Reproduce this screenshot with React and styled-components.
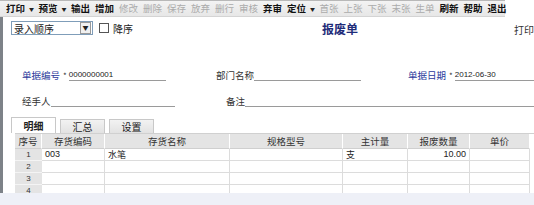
import React from "react";
import styled, { createGlobalStyle } from "styled-components";

const GlobalStyle = createGlobalStyle`
  html, body { margin: 0; padding: 0; background: #ffffff; }
  body {
    width: 534px;
    height: 205px;
    overflow: hidden;
    font-family: "Noto Sans CJK SC", "Liberation Sans", sans-serif;
    font-size: 11px;
    color: #222;
  }
`;

const Page = styled.div`
  width: 534px;
  height: 205px;
  display: flex;
  flex-direction: column;
  background: #ffffff;
`;

const Toolbar = styled.div`
  height: 17px;
  width: 505px;
  display: flex;
  align-items: center;
  padding-left: 6px;
  background: linear-gradient(#f3f3f3, #e7e7e7);
  border-top: 1px solid #b8b8b8;
  border-bottom: 1px solid #d4d4d4;
  box-sizing: border-box;
`;

const ToolButton = styled.span`
  display: inline-flex;
  align-items: center;
  width: ${(p) => (p.arrow ? 32.5 : 24)}px;
  flex: none;
  font-size: 9.5px;
  line-height: 15px;
  color: ${(p) => (p.disabled ? "#ababab" : "#111")};
  font-weight: ${(p) => (p.disabled ? 400 : 700)};
  white-space: nowrap;
`;

const Arrow = styled.span`
  font-size: 5px;
  margin-left: 4px;
  color: #222;
`;

const Body = styled.div`
  flex: 1;
  display: flex;
  border-left: 3px solid #7d8288;
`;

const Form = styled.div`
  flex: 1;
  display: flex;
  flex-direction: column;
`;

const TopRow = styled.div`
  height: 22px;
  display: flex;
  align-items: center;
  padding-left: 8px;
  position: relative;
`;

const Select = styled.div`
  width: 78px;
  height: 12px;
  border: 1px solid #7f9db9;
  display: flex;
  align-items: center;
  justify-content: space-between;
  font-size: 10px;
  padding-left: 2px;
  background: #fff;
`;

const SelectArrow = styled.span`
  width: 9px;
  height: 10px;
  margin-right: 1px;
  border: 1px solid #999;
  background: #f0f0f0;
  font-size: 6px;
  line-height: 10px;
  text-align: center;
`;

const Check = styled.span`
  width: 8px;
  height: 8px;
  border: 1px solid #555;
  margin: 0 4px 0 6px;
  background: #fff;
`;

const Small = styled.span`
  font-size: 10px;
`;

const Title = styled.div`
  position: absolute;
  left: 319px;
  top: 3px;
  font-size: 12px;
  font-weight: 700;
  color: #1f2d7a;
`;

const PrintLabel = styled.div`
  position: absolute;
  right: 0;
  top: 5px;
  font-size: 10px;
  color: #333;
`;

const FieldArea = styled.div`
  padding: 30px 0 0 19px;
  display: flex;
  flex-direction: column;
  gap: 14px;
`;

const FieldRow = styled.div`
  display: flex;
  align-items: flex-end;
  height: 12px;
`;

const Field = styled.div`
  display: flex;
  align-items: flex-end;
  width: ${(p) => p.w}px;
  flex: ${(p) => (p.grow ? 1 : "none")};
`;

const Label = styled.span`
  font-size: 9.5px;
  color: ${(p) => (p.required ? "#2b3a9b" : "#333")};
  white-space: nowrap;
  line-height: 11px;
`;

const Star = styled.span`
  font-size: 8px;
  color: #333;
  margin: 0 2px 0 3px;
  line-height: 11px;
`;

const Line = styled.span`
  flex: 1;
  border-bottom: 1px solid #9a9a9a;
  font-family: "Liberation Sans", sans-serif;
  font-size: 8px;
  line-height: 10px;
  height: 10px;
  color: #222;
  margin-right: ${(p) => p.mr || 0}px;
`;

const Tabs = styled.div`
  display: flex;
  gap: 4px;
  padding-left: 8px;
  margin-top: 10px;
  height: 16px;
  align-items: flex-end;
`;

const Tab = styled.div`
  width: 45px;
  height: ${(p) => (p.active ? 16 : 14)}px;
  box-sizing: border-box;
  border: 1px solid #c8c8c8;
  border-bottom: none;
  background: ${(p) => (p.active ? "#ffffff" : "linear-gradient(#f2f2f2, #e2e2e2)")};
  font-size: 10px;
  font-weight: ${(p) => (p.active ? 700 : 400)};
  display: flex;
  align-items: center;
  justify-content: center;
  color: #222;
`;

const Grid = styled.div`
  margin-left: 12px;
  display: grid;
  grid-template-columns: 27px 63px 125px 113px 65px 62px 60px;
  grid-template-rows: 15px;
  grid-auto-rows: 12px;
  border-top: 1px solid #d0d0d0;
  height: 59px;
  overflow: hidden;
`;

const Head = styled.div`
  background: #e4e4e4;
  border-right: 1px solid #fff;
  border-bottom: 1px solid #cfcfcf;
  font-size: 9.5px;
  text-align: center;
  line-height: 14px;
  color: #333;
`;

const Num = styled.div`
  background: #e4e4e4;
  border-bottom: 1px solid #f4f4f4;
  font-family: "Liberation Sans", sans-serif;
  font-size: 8px;
  text-align: center;
  line-height: 12px;
  color: #333;
`;

const Cell = styled.div`
  border-right: 1px solid #dcdcdc;
  border-bottom: 1px solid #dcdcdc;
  font-size: 9px;
  line-height: 11px;
  padding: 0 3px;
  text-align: ${(p) => (p.right ? "right" : "left")};
  font-family: ${(p) => (p.latin ? '"Liberation Sans", sans-serif' : "inherit")};
  white-space: nowrap;
  overflow: hidden;
`;

const Footer = styled.div`
  height: 13px;
  background: #eef0f7;
`;

const tools = [
  { t: "打印", arrow: true },
  { t: "预览", arrow: true },
  { t: "输出" },
  { t: "增加" },
  { t: "修改", d: true },
  { t: "删除", d: true },
  { t: "保存", d: true },
  { t: "放弃", d: true },
  { t: "删行", d: true },
  { t: "审核", d: true },
  { t: "弃审" },
  { t: "定位", arrow: true },
  { t: "首张", d: true },
  { t: "上张", d: true },
  { t: "下张", d: true },
  { t: "末张", d: true },
  { t: "生单", d: true },
  { t: "刷新" },
  { t: "帮助" },
  { t: "退出" },
];

const heads = ["序号", "存货编码", "存货名称", "规格型号", "主计量", "报废数量", "单价"];

const rows = [
  ["1", "003", "水笔", "", "支", "10.00", ""],
  ["2", "", "", "", "", "", ""],
  ["3", "", "", "", "", "", ""],
  ["4", "", "", "", "", "", ""],
];

export default function App() {
  return (
    <Page>
      <GlobalStyle />
      <Toolbar>
        {tools.map((b) => (
          <ToolButton key={b.t} disabled={b.d} arrow={b.arrow}>
            {b.t}
            {b.arrow && <Arrow>▼</Arrow>}
          </ToolButton>
        ))}
      </Toolbar>
      <Body>
        <Form>
          <TopRow>
            <Select>
              <span>录入顺序</span>
              <SelectArrow>▼</SelectArrow>
            </Select>
            <Check />
            <Small>降序</Small>
            <Title>报废单</Title>
            <PrintLabel>打印</PrintLabel>
          </TopRow>
          <FieldArea>
            <FieldRow>
              <Field w={194}>
                <Label required>单据编号</Label>
                <Star>*</Star>
                <Line mr={50}>0000000001</Line>
              </Field>
              <Field w={192}>
                <Label>部门名称</Label>
                <Line mr={47}></Line>
              </Field>
              <Field grow>
                <Label required>单据日期</Label>
                <Star>*</Star>
                <Line>2012-06-30</Line>
              </Field>
            </FieldRow>
            <FieldRow>
              <Field w={204}>
                <Label>经手人</Label>
                <Line mr={51}></Line>
              </Field>
              <Field grow>
                <Label>备注</Label>
                <Line></Line>
              </Field>
            </FieldRow>
          </FieldArea>
          <Tabs>
            <Tab active>明细</Tab>
            <Tab>汇总</Tab>
            <Tab>设置</Tab>
          </Tabs>
          <Grid>
            {heads.map((h) => (
              <Head key={h}>{h}</Head>
            ))}
            {rows.map((r, i) =>
              r.map((c, j) =>
                j === 0 ? (
                  <Num key={i + "-" + j}>{c}</Num>
                ) : (
                  <Cell key={i + "-" + j} right={j === 5} latin={j === 1 || j === 5}>
                    {c}
                  </Cell>
                )
              )
            )}
          </Grid>
        </Form>
      </Body>
      <Footer />
    </Page>
  );
}
